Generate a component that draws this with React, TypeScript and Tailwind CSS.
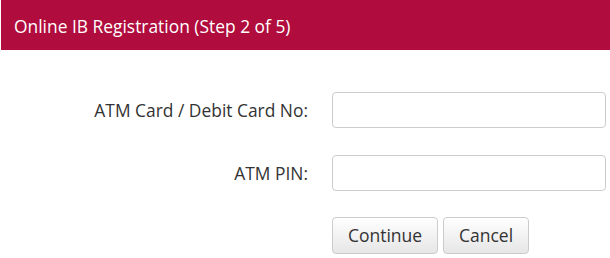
import React from "react";

export default function App() {
  return (
    <div className="w-[610px] h-[258px] bg-white overflow-hidden" style={{ fontFamily: '"Open Sans", sans-serif' }}>
      <div className="ml-px h-[50px] bg-[#b00c3d] flex items-center pl-[13px] pt-[2px]">
        <span className="text-white text-[17.4px]">Online IB Registration (Step 2 of 5)</span>
      </div>
      <div className="pt-[42px]">
        <div className="flex items-center h-[36px]">
          <div className="w-[308px] text-right text-[#333] text-[17.4px]">ATM Card / Debit Card No:</div>
          <input className="ml-[24px] w-[274px] h-[36px] border border-[#ccc] rounded-[4px] bg-white" />
        </div>
        <div className="flex items-center h-[36px] mt-[27px]">
          <div className="w-[308px] text-right text-[#333] text-[17.4px]">ATM PIN:</div>
          <input type="password" className="ml-[24px] w-[274px] h-[36px] border border-[#ccc] rounded-[4px] bg-white" />
        </div>
        <div className="flex mt-[26px] ml-[332px] gap-[5px]">
          <button className="w-[106px] h-[37px] border border-[#ccc] rounded-[4px] bg-gradient-to-b from-white to-[#e6e6e6] text-[#333] text-[17.5px]">Continue</button>
          <button className="w-[86px] h-[37px] border border-[#ccc] rounded-[4px] bg-gradient-to-b from-white to-[#e6e6e6] text-[#333] text-[17.5px]">Cancel</button>
        </div>
      </div>
    </div>
  );
}
